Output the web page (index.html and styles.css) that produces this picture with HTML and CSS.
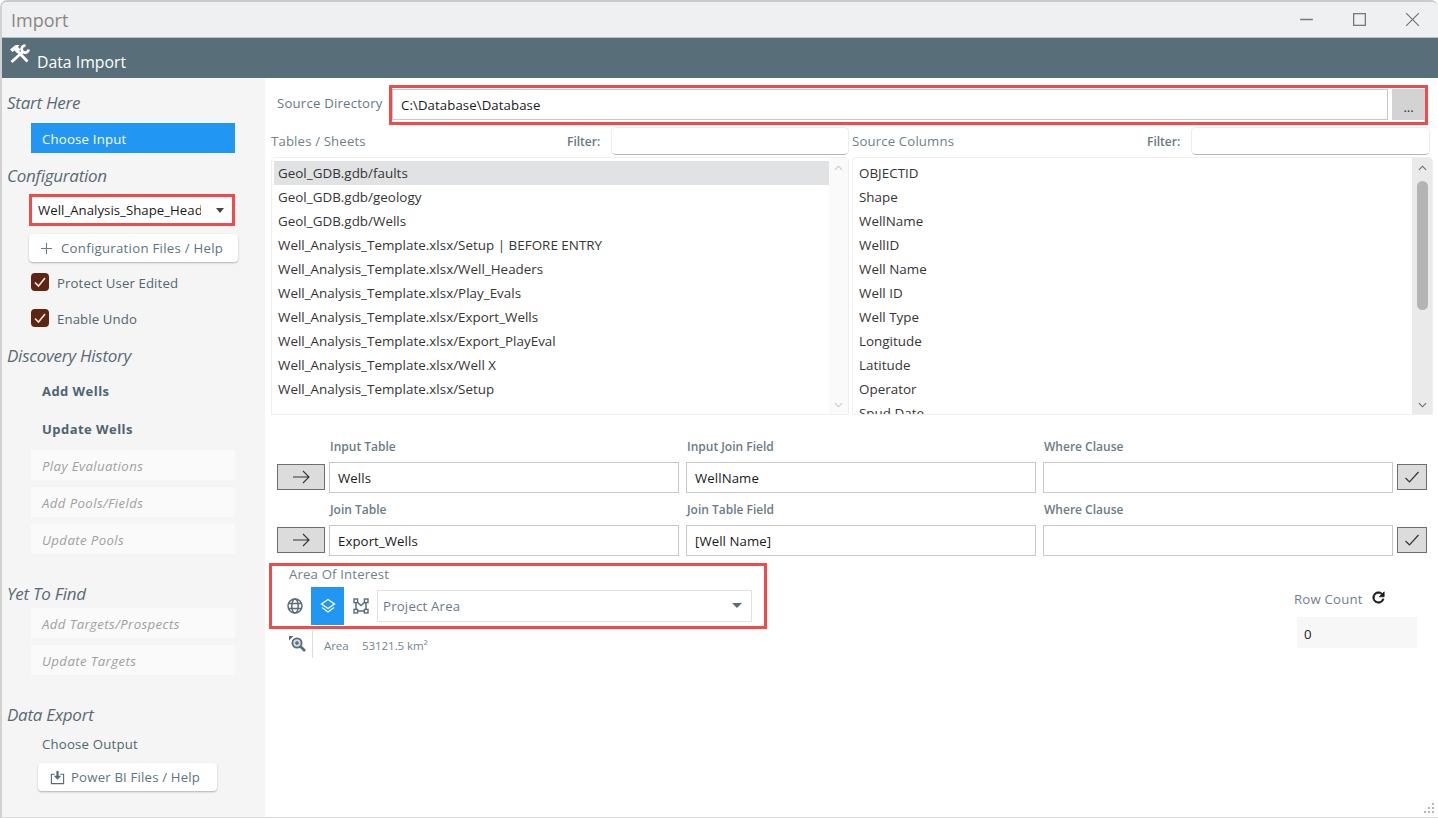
FILE: index.html
```html
<!DOCTYPE html>
<html lang="en">
<head>
<meta charset="utf-8">
<title>Import</title>
<link rel="stylesheet" href="styles.css">
</head>
<body>
<div class="window">
  <div class="titlebar">
    <span class="title">Import</span>
    <div class="win-controls">
      <svg class="win-icon" viewBox="0 0 16 16"><path d="M2 8h12"/></svg>
      <svg class="win-icon" viewBox="0 0 16 16"><rect x="2.5" y="2.5" width="11" height="11"/></svg>
      <svg class="win-icon" viewBox="0 0 16 16"><path d="M2 2l12 12M14 2L2 14"/></svg>
    </div>
  </div>
  <header class="appbar">
    <svg class="tools-icon" viewBox="0 0 21 20">
      <path class="tools-fill" d="M1 5.5L6.5 1h4L9 3l2.5 2.5L8 9 5.5 6.5 3.5 8z"/>
      <path class="tools-line" d="M8 6.5l10.5 11M2.5 18L13 8.5M16.5 1.6a3.5 3.5 0 1 0 3.1 3.9"/>
    </svg>
    <span class="appbar-title">Data Import</span>
  </header>
  <div class="body">
    <aside class="sidebar">
      <h2 class="side-head first">Start Here</h2>
      <div class="side-btn active">Choose Input</div>

      <h2 class="side-head config">Configuration</h2>
      <div class="red-box config-select">
        <span class="config-value">Well_Analysis_Shape_Headers</span>
        <span class="caret"></span>
      </div>
      <div class="raised-btn config-btn">
        <svg class="plus-icon" viewBox="0 0 14 14"><path d="M7 1v12M1 7h12"/></svg>
        <span>Configuration Files / Help</span>
      </div>
      <label class="check-row first-check"><span class="check"><svg viewBox="0 0 18 18"><path d="M4 9.5l3.5 3.5L14 5"/></svg></span><span class="check-text">Protect User Edited</span></label>
      <label class="check-row second-check"><span class="check"><svg viewBox="0 0 18 18"><path d="M4 9.5l3.5 3.5L14 5"/></svg></span><span class="check-text">Enable Undo</span></label>

      <h2 class="side-head discovery">Discovery History</h2>
      <div class="side-btn strong">Add Wells</div>
      <div class="side-btn strong">Update Wells</div>
      <div class="side-btn muted play">Play Evaluations</div>
      <div class="side-btn muted">Add Pools/Fields</div>
      <div class="side-btn muted">Update Pools</div>

      <h2 class="side-head yet">Yet To Find</h2>
      <div class="side-btn muted targets">Add Targets/Prospects</div>
      <div class="side-btn muted">Update Targets</div>

      <h2 class="side-head yet export">Data Export</h2>
      <div class="choose-output">Choose Output</div>
      <div class="raised-btn bi-btn">
        <svg class="bi-icon" viewBox="0 0 16 16"><path d="M5 4.5H1.5v10h13v-10H11"/><path class="bi-arrow" d="M6.8 1h2.4v5H12L8 10.5 4 6h2.8z"/></svg>
        <span>Power BI Files / Help</span>
      </div>
    </aside>

    <main class="main">
      <div class="source-row">
        <span class="source-label">Source Directory</span>
        <div class="red-box source-box">
          <div class="source-input">C:\Database\Database</div>
          <div class="browse">...</div>
        </div>
      </div>

      <div class="lists">
        <section class="list-col">
          <div class="list-head">
            <span class="list-title">Tables / Sheets</span>
            <span class="filter-label">Filter:</span>
            <div class="filter-input"></div>
          </div>
          <div class="listbox">
            <ul class="items">
              <li class="selected">Geol_GDB.gdb/faults</li>
              <li>Geol_GDB.gdb/geology</li>
              <li>Geol_GDB.gdb/Wells</li>
              <li>Well_Analysis_Template.xlsx/Setup | BEFORE ENTRY</li>
              <li>Well_Analysis_Template.xlsx/Well_Headers</li>
              <li>Well_Analysis_Template.xlsx/Play_Evals</li>
              <li>Well_Analysis_Template.xlsx/Export_Wells</li>
              <li>Well_Analysis_Template.xlsx/Export_PlayEval</li>
              <li>Well_Analysis_Template.xlsx/Well X</li>
              <li>Well_Analysis_Template.xlsx/Setup</li>
            </ul>
            <div class="scrollbar faint">
              <svg class="chev" viewBox="0 0 10 6"><path d="M1 5l4-4 4 4"/></svg>
              <svg class="chev" viewBox="0 0 10 6"><path d="M1 1l4 4 4-4"/></svg>
            </div>
          </div>
        </section>
        <section class="list-col wide">
          <div class="list-head">
            <span class="list-title">Source Columns</span>
            <span class="filter-label">Filter:</span>
            <div class="filter-input"></div>
          </div>
          <div class="listbox">
            <ul class="items">
              <li>OBJECTID</li>
              <li>Shape</li>
              <li>WellName</li>
              <li>WellID</li>
              <li>Well Name</li>
              <li>Well ID</li>
              <li>Well Type</li>
              <li>Longitude</li>
              <li>Latitude</li>
              <li>Operator</li>
              <li>Spud Date</li>
            </ul>
            <div class="scrollbar solid">
              <svg class="chev" viewBox="0 0 10 6"><path d="M1 5l4-4 4 4"/></svg>
              <div class="thumb"></div>
              <svg class="chev" viewBox="0 0 10 6"><path d="M1 1l4 4 4-4"/></svg>
            </div>
          </div>
        </section>
      </div>

      <div class="join-grid">
        <span></span>
        <span class="field-label">Input Table</span>
        <span class="field-label">Input Join Field</span>
        <span class="field-label">Where Clause</span>
        <span></span>
        <div class="arrow-btn"><svg viewBox="0 0 18 14"><path d="M1 7h16M11 1l6 6-6 6"/></svg></div>
        <div class="text-field">Wells</div>
        <div class="text-field">WellName</div>
        <div class="text-field"></div>
        <div class="tick-btn"><svg viewBox="0 0 16 14"><path d="M1.5 8l4 4L14.5 2"/></svg></div>

        <span></span>
        <span class="field-label">Join Table</span>
        <span class="field-label">Join Table Field</span>
        <span class="field-label">Where Clause</span>
        <span></span>
        <div class="arrow-btn"><svg viewBox="0 0 18 14"><path d="M1 7h16M11 1l6 6-6 6"/></svg></div>
        <div class="text-field">Export_Wells</div>
        <div class="text-field">[Well Name]</div>
        <div class="text-field"></div>
        <div class="tick-btn"><svg viewBox="0 0 16 14"><path d="M1.5 8l4 4L14.5 2"/></svg></div>
      </div>

      <div class="lower">
        <div class="aoi">
          <div class="red-box aoi-box">
            <div class="aoi-label">Area Of Interest</div>
            <div class="aoi-controls">
              <div class="aoi-tool">
                <svg viewBox="0 0 16 16"><circle cx="8" cy="8" r="7"/><ellipse cx="8" cy="8" rx="3.2" ry="7"/><path d="M1.5 5.5h13M1.5 10.5h13"/></svg>
              </div>
              <div class="aoi-tool on">
                <svg viewBox="0 0 16 16"><path d="M8 1.5L14.5 6 8 10.5 1.5 6zM2 9.5L8 14l6-4.5"/></svg>
              </div>
              <div class="aoi-tool">
                <svg viewBox="0 0 16 16"><path d="M3 3l5 4.5L13 3M3 13h10M3 3v10M13 3v10"/><rect class="node" x="1" y="1" width="3.6" height="3.6"/><rect class="node" x="11.4" y="1" width="3.6" height="3.6"/><rect class="node" x="1" y="11.4" width="3.6" height="3.6"/><rect class="node" x="11.4" y="11.4" width="3.6" height="3.6"/></svg>
              </div>
              <div class="aoi-select">
                <span>Project Area</span>
                <span class="caret wide-caret"></span>
              </div>
            </div>
          </div>
          <div class="area-row">
            <div class="zoom-cell">
              <svg viewBox="0 0 18 18"><circle cx="9" cy="8" r="4.6"/><path class="heavy" d="M12.5 11.5l4.5 4.5"/><path class="thin" d="M7 8h4M9 6v4"/><path class="fill" d="M1 1h4.5L1 5.5z"/></svg>
            </div>
            <span class="area-label">Area</span>
            <span class="area-value">53121.5 km²</span>
          </div>
        </div>
        <div class="rowcount">
          <div class="rowcount-head">
            <span>Row Count</span>
            <svg viewBox="0 0 24 24"><path d="M17.65 6.35A7.95 7.95 0 0 0 12 4a8 8 0 1 0 7.73 10h-2.08A6 6 0 1 1 12 6c1.66 0 3.14.69 4.22 1.78L13 11h7V4z"/></svg>
          </div>
          <div class="rowcount-value">0</div>
        </div>
      </div>
      <svg class="grip" viewBox="0 0 12 12"><path d="M9 1h2v2H9zM5 5h2v2H5zM9 5h2v2H9zM1 9h2v2H1zM5 9h2v2H5zM9 9h2v2H9z"/></svg>
    </main>
  </div>
</div>
</body>
</html>
```
FILE: styles.css
```css
* { box-sizing: border-box; }
html, body { margin: 0; height: 100%; overflow: hidden; background: #fff; }
body { font-family: "Open Sans", "Noto Sans", sans-serif; font-size: 13px; color: #1c1c1c; }

.window {
  width: 1438px; height: 818px; display: flex; flex-direction: column;
  border-top: 2px solid #c9cbce; border-left: 2px solid #d2d2d2;
  border-bottom: 1px solid #d8d8d8; border-radius: 7px 7px 0 0; overflow: hidden;
}

.titlebar { height: 36px; flex: none; background: #eff0f2; display: flex; align-items: center; justify-content: space-between; padding-left: 9px; border-bottom: 1px solid #b5bfc4; }
.title { font-size: 18px; color: #8b8680; }
.win-controls { display: flex; gap: 36px; padding-right: 17px; align-items: center; }
.win-icon { width: 17px; height: 17px; fill: none; stroke: #777; stroke-width: 1.2; display: block; }

.appbar { height: 40px; flex: none; background: #586e79; color: #fff; display: flex; align-items: center; padding-left: 7px; }
.tools-icon { width: 21px; height: 20px; margin-top: -8px; flex: none; }
.tools-fill { fill: #fff; }
.tools-line { fill: none; stroke: #fff; stroke-width: 2.8; }
.appbar-title { font-size: 15.8px; margin-left: 7px; margin-top: 7px; }

.body { flex: 1; display: flex; min-height: 0; }

/* Sidebar */
.sidebar { width: 263px; flex: none; background: #f5f5f5; padding-left: 6px; display: flex; flex-direction: column; align-items: flex-start; color: #51666f; }
.side-head { margin: 0 0 0 -1px; font-size: 17px; line-height: 24px; height: 24px; font-weight: 400; font-style: italic; color: #586a75; white-space: nowrap; letter-spacing: -.25px; }
.side-head.first { margin-top: 13px; margin-bottom: 8px; }
.side-head.config { margin-top: 11px; margin-bottom: 6px; }
.side-head.discovery { margin-top: 17px; margin-bottom: 8px; }
.side-head.yet { margin-top: 28px; margin-bottom: 2px; }
.side-head.export { margin-bottom: 0; }

.side-btn { width: 204px; height: 30px; margin-left: 23px; padding: 1px 0 0 11px; display: flex; align-items: center; font-size: 13.2px; letter-spacing: .2px; white-space: nowrap; }
.side-btn.active { background: #2196f3; color: #fff; }
.side-btn.strong { font-weight: 700; color: #4e6470; margin-bottom: 8px; font-size: 13px; padding-top: 0; letter-spacing: .45px; }
.side-btn.strong + .side-btn.strong { margin-bottom: 6px; }
.side-btn.muted { background: #fafafa; color: #a0a0a0; font-style: italic; margin-bottom: 7px; letter-spacing: .4px; }
.side-btn.muted + .side-head { margin-top: 21px; }

.red-box { border: 3px solid #ee4b4b; }
.config-select { width: 206px; height: 32px; margin-left: 21px; display: flex; align-items: center; padding: 0 0 0 6px; background: #fff; overflow: hidden; }
.config-value { width: 163px; flex: none; overflow: hidden; white-space: nowrap; color: #1a1a1a; font-size: 13.2px; letter-spacing: .04px; }
.caret { width: 0; height: 0; flex: none; border-left: 4.5px solid transparent; border-right: 4.5px solid transparent; border-top: 5px solid #444; margin-left: 15px; }

.raised-btn { background: #fff; border-radius: 4px; box-shadow: 0 1px 2px rgba(0,0,0,.28); display: flex; align-items: center; white-space: nowrap; color: #5d7480; font-size: 13.2px; letter-spacing: .28px; }
.config-btn { width: 209px; height: 28px; margin: 8px 0 0 21px; padding-left: 11px; }
.plus-icon { width: 13px; height: 13px; fill: none; stroke: #6c808a; stroke-width: 1.2; margin-right: 8px; }
.bi-btn { width: 179px; height: 28px; margin: 7px 0 0 30px; padding-left: 12px; letter-spacing: .18px; }
.bi-icon { width: 15px; height: 15px; fill: none; stroke: #566c78; stroke-width: 1.2; margin-right: 6px; flex: none; }
.bi-arrow { fill: #566c78; stroke: none; }

.check-row { display: flex; align-items: center; height: 18px; margin-left: 23px; font-size: 13.2px; letter-spacing: .12px; color: #51666f; }
.check-text { padding-top: 2px; }
.first-check { margin-top: 11px; }
.second-check { margin-top: 18px; }
.check { width: 18px; height: 18px; background: #5e2612; border-radius: 4px; margin-right: 8px; display: block; }
.check svg { display: block; width: 18px; height: 18px; fill: none; stroke: #f3e9e2; stroke-width: 1.6; }

.choose-output { margin: 5px 0 0 34px; height: 24px; line-height: 24px; font-size: 13.2px; letter-spacing: .2px; }

/* Main */
.main { flex: 1; min-width: 0; position: relative; padding-left: 6px; background: #fff; }
.source-row { display: flex; align-items: flex-start; height: 39px; margin-top: 7px; }
.source-label { width: 118px; padding-left: 6px; padding-top: 9px; font-size: 13.2px; letter-spacing: .2px; color: #67797f; white-space: nowrap; }
.source-box { width: 1039px; height: 40px; flex: none; display: flex; gap: 4px; padding: 1px 0; align-items: flex-start; background: #fff; }
.source-input { width: 996px; height: 31px; flex: none; border: 1px solid #c8c8c8; padding: 5px 8px 0; line-height: 20px; font-size: 13.2px; letter-spacing: .1px; color: #1a1a1a; }
.browse { width: 33px; height: 31px; flex: none; background: #d3d3d3; text-align: center; color: #333; font-size: 13px; line-height: 36px; }

.lists { display: flex; gap: 3px; margin-top: 3px; }
.list-col { width: 578px; flex: none; }
.list-col.wide { width: 581px; }
.list-head { height: 28px; width: 578px; display: flex; align-items: center; }
.list-title { font-size: 13.2px; letter-spacing: .15px; color: #6f818a; flex: 1; }
.filter-label { font-size: 12px; font-weight: 600; color: #67797f; width: 44px; white-space: nowrap; }
.filter-input { width: 238px; height: 28px; border: 1px solid #ececec; border-bottom-color: #b5b5b5; border-radius: 5px; background: #fff; }
.list-col.wide .filter-input { width: 239px; }
.listbox { height: 258px; margin-top: 2px; border: 1px solid #efefef; border-radius: 4px 4px 0 0; display: flex; overflow: hidden; }
.items { list-style: none; margin: 0; padding: 3px 0 0 2px; flex: 1; min-width: 0; }
.items li { height: 24px; line-height: 24px; padding-left: 4px; font-size: 13.4px; letter-spacing: .02px; color: #353535; white-space: nowrap; }
.items li.selected { background: #e1e2e3; }
.scrollbar { width: 19px; flex: none; display: flex; flex-direction: column; align-items: center; justify-content: space-between; padding: 7px 0 6px; }
.scrollbar.faint { background: #fafafa; }
.scrollbar.faint .chev { stroke: #c8c8c8; }
.scrollbar.solid { width: 20px; background: #eaeaea; justify-content: flex-start; }
.chev { width: 9px; height: 6px; fill: none; stroke: #666; stroke-width: 1.2; flex: none; }
.thumb { width: 11px; height: 129px; margin: 10px 0 auto; background: #b4b4b4; border-radius: 6px; }

.join-grid { display: grid; grid-template-columns: 52px 357px 357px 354px 34px; grid-template-rows: 24px 39px 24px 31px; margin: 23px 0 0 6px; width: 1154px; }
.field-label { font-size: 12px; font-weight: 600; color: #6a7c87; padding-left: 1px; line-height: 17px; white-space: nowrap; }
.text-field { width: 350px; height: 31px; border: 1px solid #c8c8c8; padding-left: 8px; line-height: 31px; font-size: 13.2px; letter-spacing: .1px; color: #1a1a1a; }
.arrow-btn, .tick-btn { height: 26px; background: #dcdcdc; border: 1px solid #6e6e6e; display: flex; align-items: center; justify-content: center; margin-top: 2px; }
.arrow-btn { width: 48px; }
.tick-btn { width: 30px; }
.arrow-btn svg { width: 18px; height: 14px; fill: none; stroke: #333; stroke-width: 1.1; }
.tick-btn svg { width: 16px; height: 14px; fill: none; stroke: #333; stroke-width: 1.2; }

.lower { display: flex; justify-content: space-between; margin-top: 7px; }
.aoi { width: 498px; margin-left: -2px; }
.aoi-box { width: 498px; height: 66px; padding: 0 12px 0 6px; }
.aoi-label { font-size: 13.2px; letter-spacing: .15px; color: #6f818a; height: 17px; line-height: 17px; padding-left: 11px; }
.aoi-controls { display: flex; align-items: center; margin-top: 3px; }
.aoi-tool { width: 33px; height: 38px; margin-top: 1px; display: flex; align-items: center; justify-content: center; flex: none; }
.aoi-tool svg { width: 16px; height: 16px; fill: none; stroke: #5a6d78; stroke-width: 1.5; }
.aoi-tool.on { background: #2196f3; }
.aoi-tool.on svg { stroke: #fff; stroke-width: 1.3; }
.aoi-tool .node { fill: #fff; stroke: #5a6d78; stroke-width: 1.4; }
.aoi-select { width: 375px; height: 32px; border: 1px solid #e2e2e2; display: flex; align-items: center; justify-content: space-between; padding: 0 9px 0 5px; font-size: 13.2px; letter-spacing: .2px; color: #6a7c87; }
.caret.wide-caret { border-left-width: 5.5px; border-right-width: 5.5px; border-top: 5px solid #5a6d78; margin: 0; }
.area-row { display: flex; align-items: center; height: 28px; margin-top: 1px; padding-left: 20px; }
.zoom-cell { width: 24px; height: 28px; border-right: 1px solid #ddd; margin-right: 11px; display: flex; align-items: center; }
.zoom-cell svg { width: 18px; height: 18px; margin-left: -1px; fill: #566c78; fill-opacity: .25; stroke: #566c78; stroke-width: 1.8; }
.zoom-cell .heavy { stroke-width: 2.6; }
.zoom-cell .thin { stroke-width: 1.4; }
.zoom-cell .fill { fill: #566c78; fill-opacity: 1; stroke: none; }
.area-label, .area-value { font-size: 11.6px; color: #74858e; letter-spacing: -.1px; padding-top: 2px; }
.area-label { width: 38px; }

.rowcount { width: 134px; margin-right: 10px; margin-top: 26px; }
.rowcount-head { display: flex; align-items: center; gap: 7px; font-size: 13.2px; letter-spacing: .2px; color: #6f818a; height: 20px; white-space: nowrap; }
.rowcount-head svg { width: 17px; height: 17px; fill: #1a1a1a; stroke: #1a1a1a; stroke-width: 1; margin-top: -3px; }
.rowcount-value { width: 120px; height: 31px; margin: 8px 0 0 3px; background: #f7f7f7; padding-left: 7px; line-height: 35px; font-size: 13.2px; color: #222; }

.grip { position: absolute; right: 3px; bottom: 3px; width: 12px; height: 12px; fill: #b5b5b5; }
```
